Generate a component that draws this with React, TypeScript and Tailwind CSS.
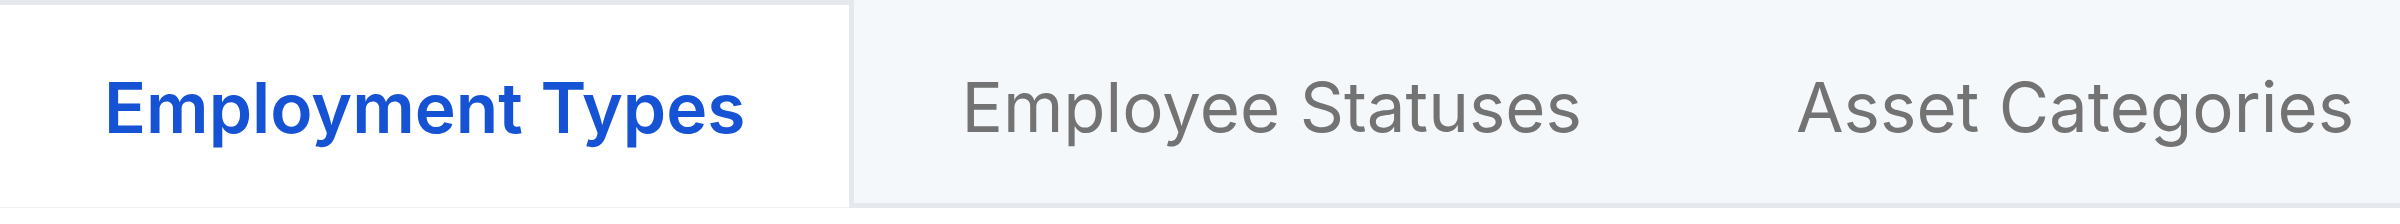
import React from "react";

const tabs = ["Employment Types", "Employee Statuses", "Asset Categories"];

export default function App() {
  return (
    <div className="w-[2400px] h-[224px] bg-white overflow-hidden" style={{ fontFamily: "Inter, 'Noto Sans', sans-serif" }}>
      <div className="flex h-[208px] w-full bg-[#f5f8fb]">
        {tabs.map((t, i) =>
          i === 0 ? (
            <div
              key={t}
              className="flex-none flex items-center justify-center h-full px-[104px] pt-[5px] bg-white border-t-[5px] border-r-[5px] border-[#e5e9ee] shadow-[inset_0_-1px_0_#f1f2f4]"
            >
              <span className="text-[69.5px] leading-none font-semibold text-[#1652d4]">{t}</span>
            </div>
          ) : (
            <div
              key={t}
              className="flex-none flex items-center justify-center h-full px-[107px] pt-[11px] border-b-[5px] border-[#e5e9ee]"
            >
              <span className="text-[69px] leading-none font-normal text-[#737373]">{t}</span>
            </div>
          )
        )}
        <div className="flex-1 border-b-[5px] border-[#e5e9ee]" />
      </div>
    </div>
  );
}
